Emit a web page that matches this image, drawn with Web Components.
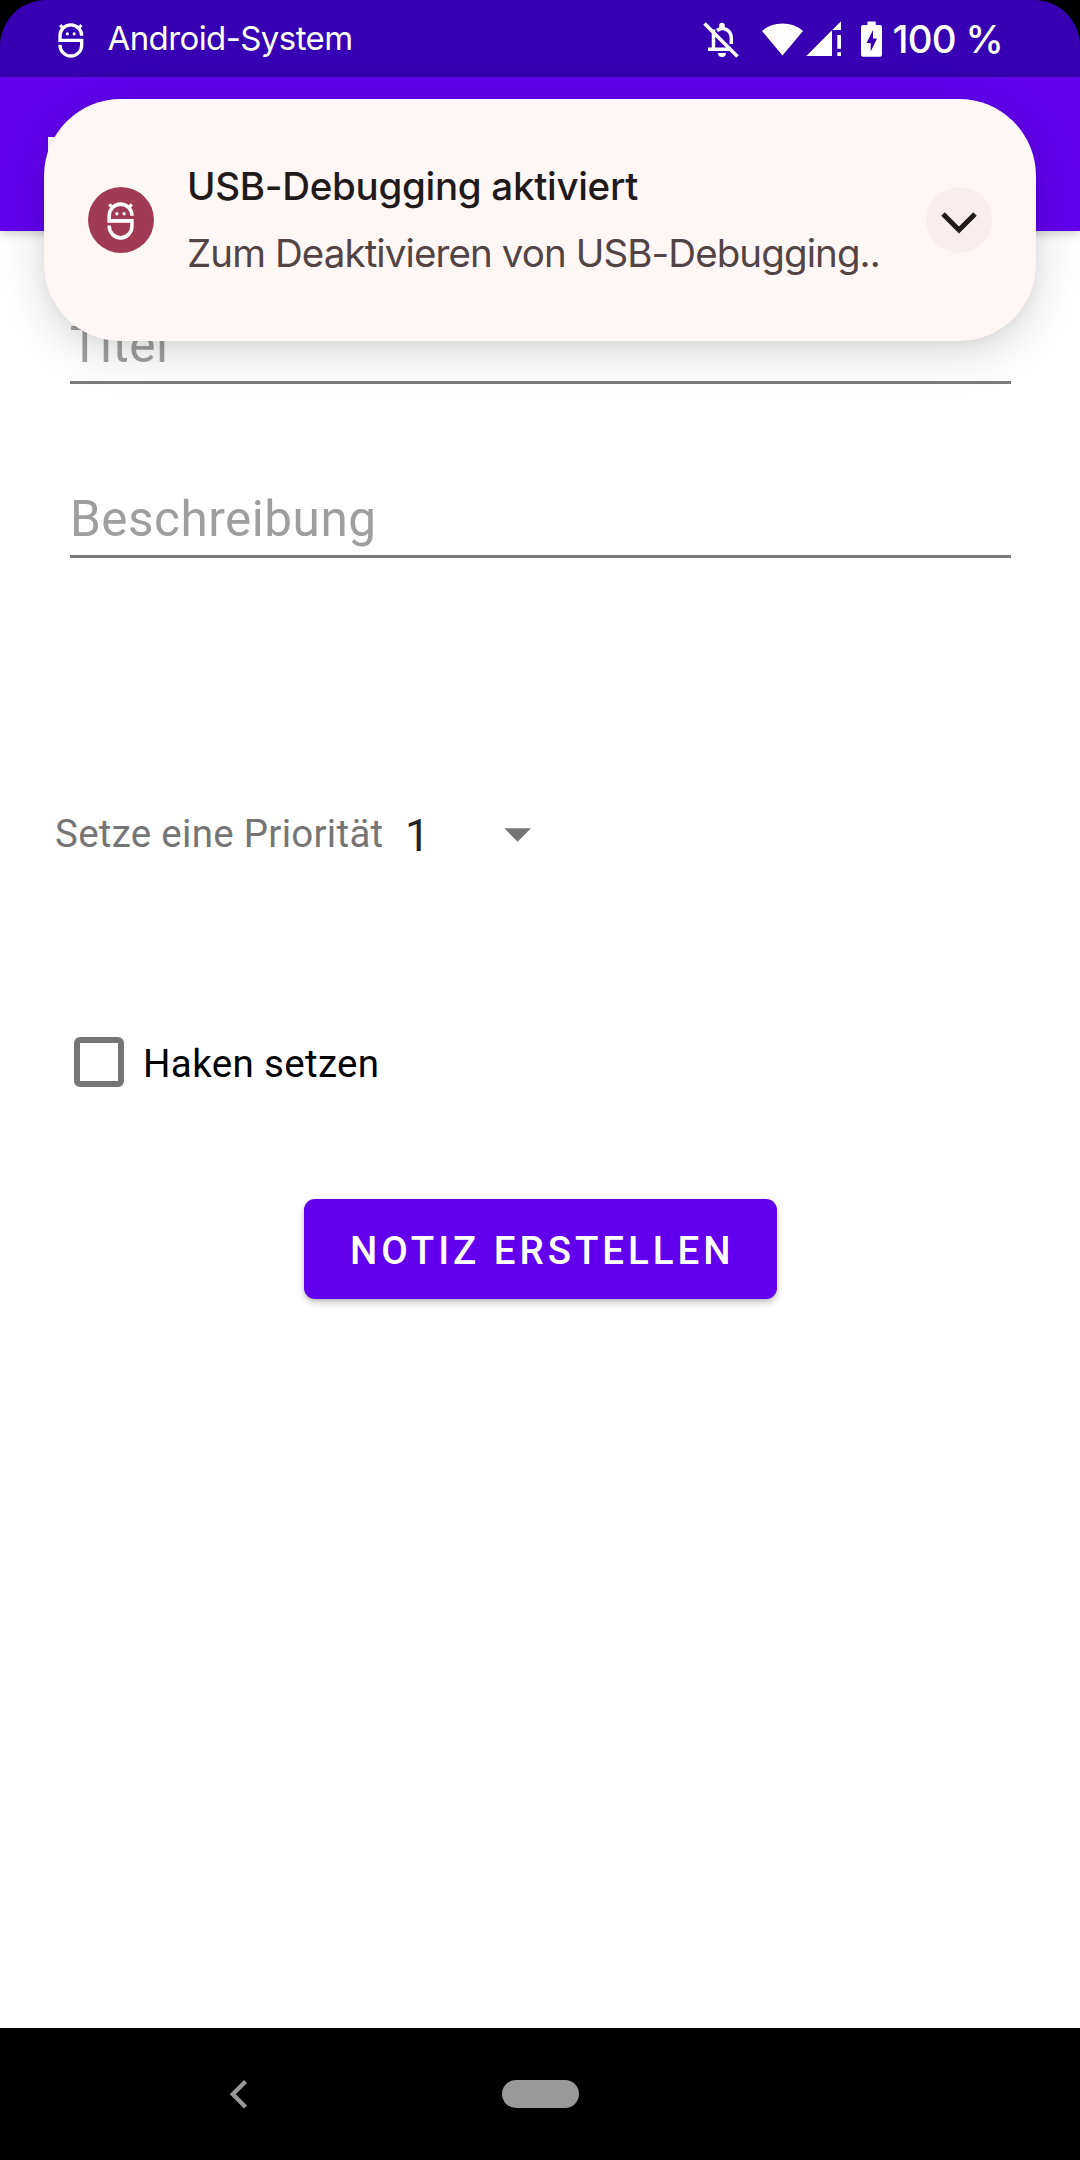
<!DOCTYPE html>
<html lang="de">
<head>
<meta charset="utf-8">
<title>Notiz erstellen</title>
<style>
html,body{margin:0;height:100%}
body{width:1080px;height:2160px;background:#000;font-family:Roboto,sans-serif;overflow:hidden}
</style>
</head>
<body>
<phone-screen>
  <status-bar slot="status"></status-bar>
  <app-bar slot="top"></app-bar>
  <note-form slot="main">
    <text-field w="98.5">Titel</text-field>
    <text-field w="306.5">Beschreibung</text-field>
    <priority-row>Setze eine Priorität</priority-row>
    <check-row>Haken setzen</check-row>
    <raised-button>NOTIZ ERSTELLEN</raised-button>
  </note-form>
  <nav-bar slot="nav"></nav-bar>
  <heads-up slot="overlay">
    <span slot="title">USB-Debugging aktiviert</span>
    <span slot="text">Zum Deaktivieren von USB-Debugging..</span>
  </heads-up>
</phone-screen>
<script>
const define = (name, html, init) => customElements.define(name, class extends HTMLElement {
  constructor() {
    super();
    this.attachShadow({mode: 'open'}).innerHTML = html;
  }
  connectedCallback() { if (init) init(this); }
});

// Tracks its text so that it fills the advance width given in the w attribute.
define('fit-text', `<style>:host{display:block;white-space:nowrap}span{display:inline-block}</style><span><slot></slot></span>`, el => {
  const span = el.shadowRoot.querySelector('span');
  const target = parseFloat(el.getAttribute('w'));
  const host = el.getRootNode().host;
  const count = (el.dataset.n ? +el.dataset.n : (host && el.querySelector('slot') ? host.textContent : el.textContent).trim().length);
  requestAnimationFrame(() => {
    const natural = span.getBoundingClientRect().width;
    span.style.letterSpacing = ((target - natural) / count) + 'px';
  });
});

define('droid-icon', `<style>:host{display:block;width:28px;height:36px}svg{display:block;width:100%;height:100%}</style>
<svg viewBox="50 34 84 108" preserveAspectRatio="none" fill="none" stroke="#fff" stroke-width="10">
<path d="M124 75A32.500 32.500 0 0 0 59 75V89H124V103.500A32.500 32.500 0 0 1 59 103.500V102"/>
<path d="M59.500 43.500L68 52M123.500 43.500L115 52" stroke-width="9"/>
<circle cx="81" cy="69.500" r="4.800" fill="#fff" stroke="none"/><circle cx="101.500" cy="69.500" r="4.800" fill="#fff" stroke="none"/></svg>`);

define('status-bar', `<style>
:host{display:flex;align-items:center;height:77px;background:#3700b3;color:#fff;font-family:Inter,sans-serif;line-height:77px;box-sizing:border-box;padding:0 76.500px 0 56.500px}
droid-icon{margin-top:2px}
.app{font-size:33px;margin-left:23px;width:245px;flex:none}
.sp{flex:1}
svg{display:block;flex:none}
.pct{font-size:38.5px;font-weight:500;margin-left:9.500px;width:111px;flex:none;padding-top:1px}
</style>
<droid-icon></droid-icon><fit-text class="app" w="245">Android-System</fit-text><div class="sp"></div>
<svg width="184" height="44" viewBox="699 17 184 44" fill="#fff">
<g fill="none" stroke="#fff" stroke-width="3.500"><path d="M704.500 23.500L737.500 56.500"/><path d="M713.500 29.500V49M708 49.300H731M717 30.500C724 25.500 731.300 31 731.300 38V44"/></g>
<path d="M719.200 30V25.500A2.800 2.800 0 0 1 724.800 25.500V30ZM718 53H726A4 4 0 0 1 718 53Z"/>
<path d="M762 31A31.500 31.500 0 0 1 803 31L782.500 55.500Z"/>
<path d="M806.300 56L841 21.300V30H832V56Z"/><path d="M837.300 35H841V48.700H837.300ZM837.300 52.300H841V56H837.300Z"/>
<path fill-rule="evenodd" d="M867.500 21.500H875.700V25H880A2 2 0 0 1 882 27V54.700A2 2 0 0 1 880 56.700H863A2 2 0 0 1 861 54.700V27A2 2 0 0 1 863 25H867.500ZM873 30L866.500 43H870.700V51.500L877 38.500H873Z"/>
</svg>
<fit-text class="pct" w="110.5">100 %</fit-text>`);

define('app-bar', `<style>
:host{display:flex;align-items:flex-start;height:154px;background:#6200ee;box-shadow:0 2px 10px rgba(0,0,0,.22);position:relative;padding:60px 48px 0;box-sizing:border-box}
i{width:9px;height:34px;background:#fff}
</style><i></i>`);

define('note-form', `<style>:host{display:flex;flex-direction:column;align-items:stretch;padding:83px 69px 0 70px;height:1797px;box-sizing:border-box;background:#fff}</style><slot></slot>`);

define('text-field', `<style>
:host{display:block;height:67px;border-bottom:3px solid #7b7b7b;margin-bottom:104px;color:#9e9e9e;font-size:49.5px;line-height:63px}
</style><fit-text><slot></slot></fit-text>`, el => {
  const f = el.shadowRoot.querySelector('fit-text');
  const span = f.shadowRoot.querySelector('span');
  requestAnimationFrame(() => {
    span.style.letterSpacing = '0px';
    span.style.letterSpacing = ((+el.getAttribute('w') - span.getBoundingClientRect().width) / el.textContent.length) + 'px';
  });
});

define('priority-row', `<style>
:host{display:flex;align-items:flex-start;height:52px;margin:147px 0 0 -15px;line-height:50px;font-size:38.5px;color:#757575}
.label{width:329px;flex:none}
.v{font-size:44px;color:#212121;width:26px;margin:2px 0 0 21px}
svg{margin:19px 0 0 73px;display:block}
</style><fit-text class="label" w="328.5"><slot></slot></fit-text><div class="v">1</div>
<svg width="28" height="14" viewBox="0 0 28 14"><path d="M.3 .3H27L13.600 13.700Z" fill="#757575"/></svg>`);

define('check-row', `<style>
:host{display:flex;align-items:center;height:50px;margin:176px 0 0 4px;line-height:50px;font-size:38.5px;color:#000}
.box{width:50px;height:50px;box-sizing:border-box;border:6px solid #757575;border-radius:6px;flex:none}
.label{margin:4px 0 0 19px}
</style><div class="box"></div><fit-text class="label" w="236.5"><slot></slot></fit-text>`);

define('raised-button', `<style>
:host{display:flex;justify-content:flex-start;align-self:flex-start;width:473px;height:100px;box-sizing:border-box;padding:2px 0 0 46px;margin:112px 0 0 234px;background:#6200ee;border-radius:11px;color:#fff;font-size:38.5px;font-weight:500;line-height:100px;box-shadow:0 4px 7px rgba(0,0,0,.2),0 1px 3px rgba(0,0,0,.12)}
</style><fit-text w="384.5"><slot></slot></fit-text>`);

define('nav-bar', `<style>
:host{display:flex;align-items:center;height:132px;background:#000}
svg{display:block;margin-left:229px}
.pill{width:77px;height:28px;border-radius:14px;background:#999;margin:0 0 0 253px}
</style><svg width="20" height="32" viewBox="229 2078 20 32"><path d="M245.500 2081.500L232.800 2094.200L245.500 2106.900" fill="none" stroke="#999" stroke-width="4.300"/></svg><div class="pill"></div>`);

define('heads-up', `<style>
:host{position:absolute;left:44px;top:99px;width:992px;height:242px;box-sizing:border-box;border-radius:77px;background:#fff6f6;display:flex;align-items:center;padding:0 44px;box-shadow:0 10px 46px rgba(0,0,0,.17),0 2px 12px rgba(0,0,0,.04);font:38.5px/50px Inter,sans-serif}
.ic{width:66px;height:66px;border-radius:50%;background:#a03a55;display:flex;align-items:center;justify-content:center;flex:none}
.ic droid-icon{width:29.500px;height:39px}
.t{display:flex;flex-direction:column;gap:17px;margin-left:33px;flex:1;padding-bottom:1px}
.a{font-weight:500;color:#201a1a}
.b{color:#524345}
.c{width:66px;height:66px;border-radius:50%;background:#faeded;flex:none}
</style>
<div class="ic"><droid-icon></droid-icon></div>
<div class="t"><fit-text class="a" w="451" data-n="23"><slot name="title"></slot></fit-text><fit-text class="b" w="693" data-n="36"><slot name="text"></slot></fit-text></div>
<div class="c"><svg width="66" height="66" viewBox="0 0 66 66"><path d="M17 27L33 43L49 27" fill="none" stroke="#201a1a" stroke-width="5"/></svg></div>`);

define('phone-screen', `<style>
:host{display:flex;flex-direction:column;width:1080px;height:2160px;position:relative;overflow:hidden;border-radius:46px 46px 0 0}
</style><slot name="status"></slot><slot name="top"></slot><slot name="main"></slot><slot name="nav"></slot><slot name="overlay"></slot>`);
</script>
</body>
</html>
